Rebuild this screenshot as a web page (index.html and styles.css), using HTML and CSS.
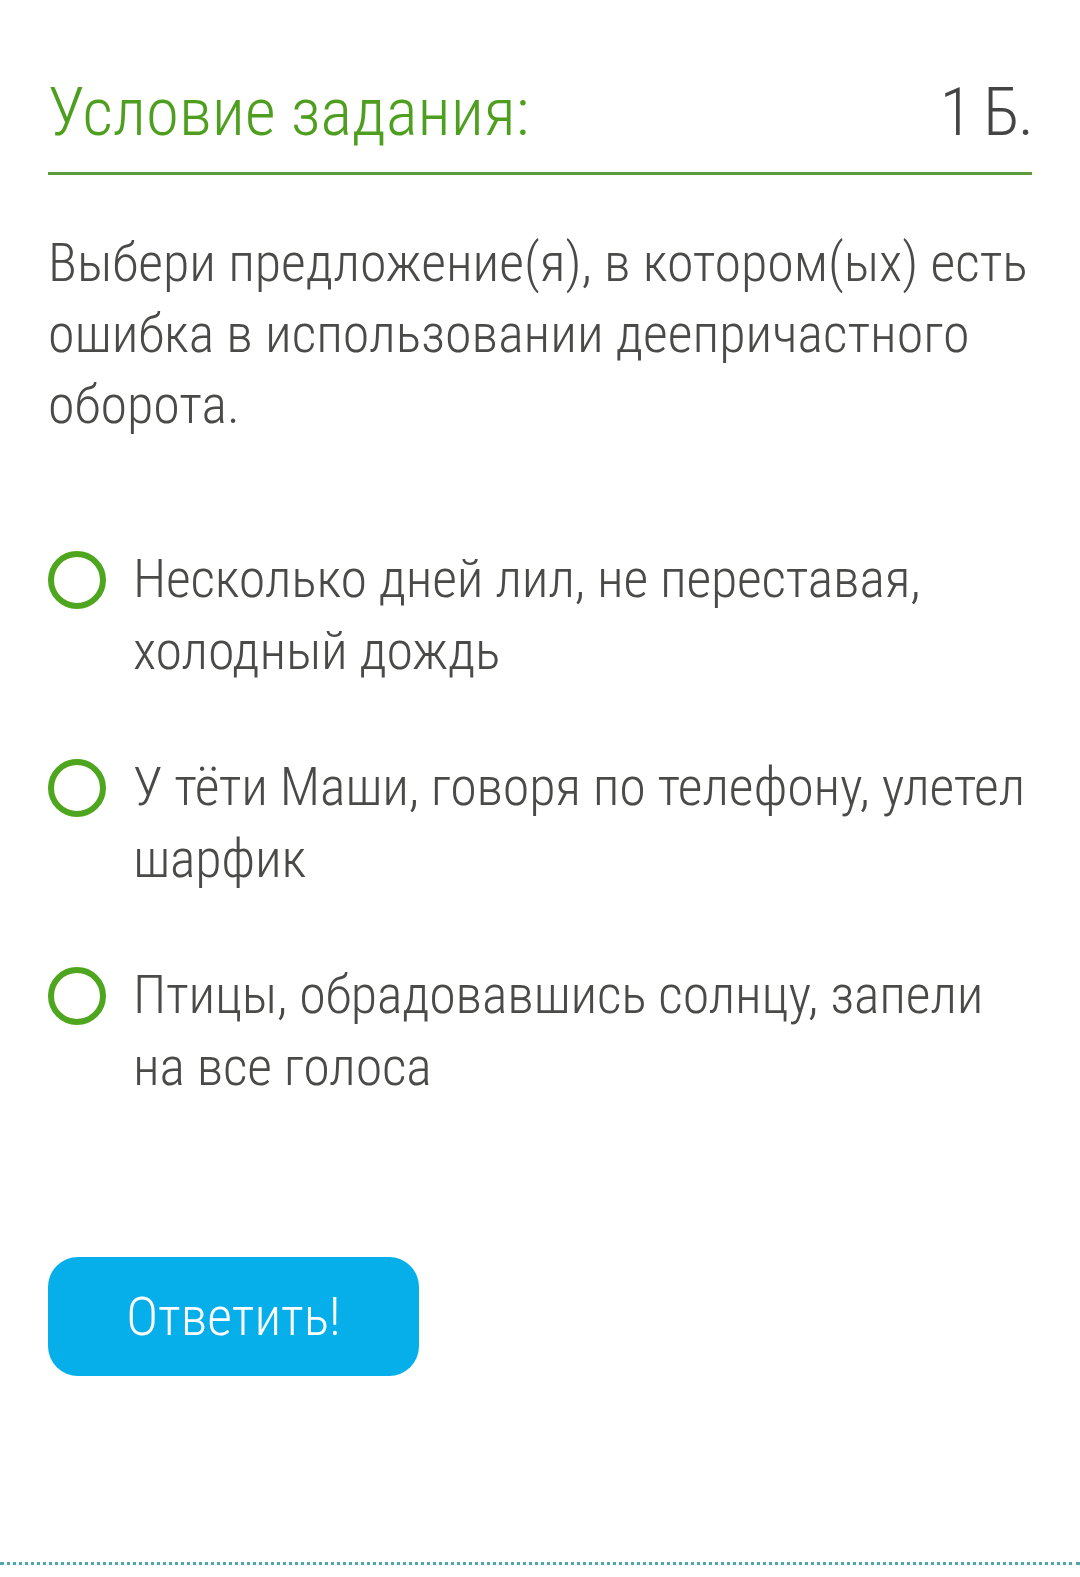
FILE: index.html
```html
<!DOCTYPE html>
<html lang="ru">
<head>
    <meta charset="UTF-8">
    <meta name="viewport" content="width=device-width, initial-scale=1.0">
    <title>Условие задания</title>
    <link rel="stylesheet" href="styles.css">
</head>
<body>
    <div class="task">
        <div class="task-header">
            <h2 class="task-title">Условие задания:</h2>
            <span class="task-points">1 Б.</span>
        </div>

        <p class="task-text">Выбери предложение(я), в котором(ых) есть ошибка в использовании деепричастного оборота.</p>

        <form class="answers">
            <label class="answer">
                <input type="radio" name="answer" value="1">
                <span class="radio"></span>
                <span class="answer-text">Несколько дней лил, не переставая, холодный дождь</span>
            </label>
            <label class="answer">
                <input type="radio" name="answer" value="2">
                <span class="radio"></span>
                <span class="answer-text">У тёти Маши, говоря по телефону, улетел шарфик</span>
            </label>
            <label class="answer">
                <input type="radio" name="answer" value="3">
                <span class="radio"></span>
                <span class="answer-text">Птицы, обрадовавшись солнцу, запели на все голоса</span>
            </label>

            <button type="submit" class="submit-btn">Ответить!</button>
        </form>
    </div>
    <div class="divider"></div>
</body>
</html>
```

FILE: styles.css
```css
body {
    margin: 0;
    background-color: #ffffff;
    font-family: "Roboto Condensed", Roboto, "Liberation Sans", sans-serif;
    font-weight: 300;
    color: #4a4a48;
}

.task {
    padding: 0 48px;
}

.task-header {
    display: flex;
    justify-content: space-between;
    align-items: baseline;
    padding-top: 72px;
    padding-bottom: 20px;
    border-bottom: 3px solid #5c9c3c;
}

.task-title {
    margin: 0;
    font-size: 67px;
    font-weight: 300;
    line-height: 80px;
    color: #4e9f1f;
}

.task-points {
    font-size: 67px;
    line-height: 80px;
    letter-spacing: -2px;
    color: #444;
}

.task-text {
    margin: 52px 0 0;
    font-size: 54px;
    line-height: 71px;
}

.answers {
    margin-top: 103px;
}

.answer {
    display: flex;
    align-items: flex-start;
    gap: 27px;
    margin-bottom: 64px;
    cursor: pointer;
}

.answer input {
    display: none;
}

.radio {
    flex: none;
    width: 46px;
    height: 46px;
    margin-top: 8px;
    border: 6px solid #4ea61f;
    border-radius: 50%;
}

.answer-text {
    font-size: 54px;
    line-height: 72px;
    letter-spacing: -0.2px;
}

.submit-btn {
    margin-top: 90px;
    width: 371px;
    height: 119px;
    border: none;
    border-radius: 30px;
    background-color: #06aeea;
    color: #ffffff;
    font-family: inherit;
    font-weight: 300;
    font-size: 54px;
    cursor: pointer;
}

.divider {
    margin-top: 186px;
    border-top: 3px dotted #4ea8ad;
}
```
